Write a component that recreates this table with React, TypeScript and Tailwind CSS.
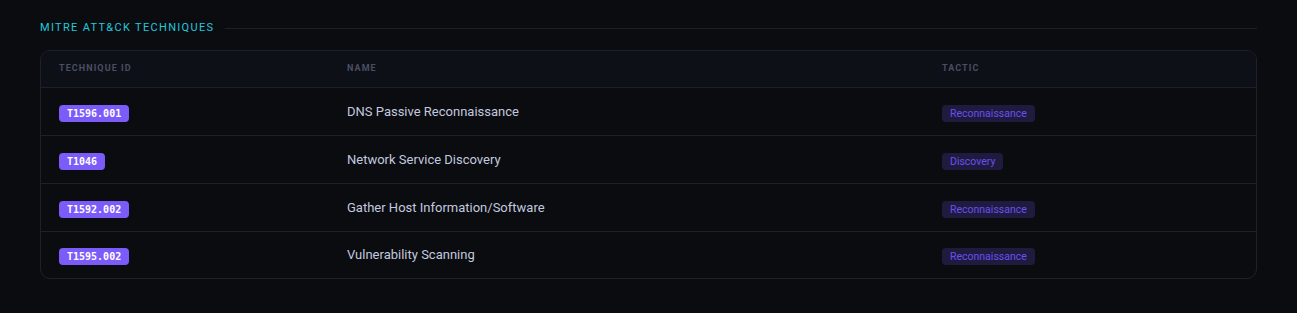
const techniques = [
  { id: 'T1596.001', name: 'DNS Passive Reconnaissance', tactic: 'Reconnaissance' },
  { id: 'T1046', name: 'Network Service Discovery', tactic: 'Discovery' },
  { id: 'T1592.002', name: 'Gather Host Information/Software', tactic: 'Reconnaissance' },
  { id: 'T1595.002', name: 'Vulnerability Scanning', tactic: 'Reconnaissance' },
]

export default function App() {
  return (
    <div
      className="min-h-screen bg-[#0b0c10] px-10 pt-[20px] pb-8"
      style={{ fontFamily: 'Roboto, "Liberation Sans", sans-serif' }}
    >
      {/* Section title */}
      <div className="flex items-center gap-[11px] h-[16px]">
        <span className="text-[11px] tracking-[0.12em] text-[#22c8dc] whitespace-nowrap">
          MITRE ATT&amp;CK TECHNIQUES
        </span>
        <div className="flex-1 h-px bg-[#1d1f2a]" />
      </div>

      {/* Table */}
      <div className="mt-[14px] rounded-[10px] border border-[#1e2030] overflow-hidden">
        <div className="grid grid-cols-[288px_595px_1fr] h-[37px] items-center bg-[#0e1017] border-b border-[#1e2030]">
          {['TECHNIQUE ID', 'NAME', 'TACTIC'].map((h) => (
            <div
              key={h}
              className="pl-[18px] text-[9px] font-bold tracking-[0.12em] text-[#4a4e63]"
            >
              {h}
            </div>
          ))}
        </div>
        {techniques.map((t, i) => (
          <div
            key={t.id}
            className={
              'grid grid-cols-[288px_595px_1fr] items-center ' +
              (i < techniques.length - 1 ? 'h-[48px] border-b border-[#1e2030]' : 'h-[46px]')
            }
          >
            <div className="pl-[18px]">
              <span
                className="inline-flex items-center h-[17px] px-[8px] rounded-[4px] bg-[#7b5cf9] text-white text-[10px] font-bold"
                style={{ fontFamily: '"DejaVu Sans Mono", "Liberation Mono", monospace' }}
              >
                {t.id}
              </span>
            </div>
            <div className="pl-[18px] text-[13px] text-[#c2c9df]">{t.name}</div>
            <div className="pl-[18px]">
              <span className="inline-flex items-center h-[17px] px-[8px] rounded-[4px] bg-[#1f1b3e] text-[#6b4ff0] text-[10.5px]">
                {t.tactic}
              </span>
            </div>
          </div>
        ))}
      </div>
    </div>
  )
}
